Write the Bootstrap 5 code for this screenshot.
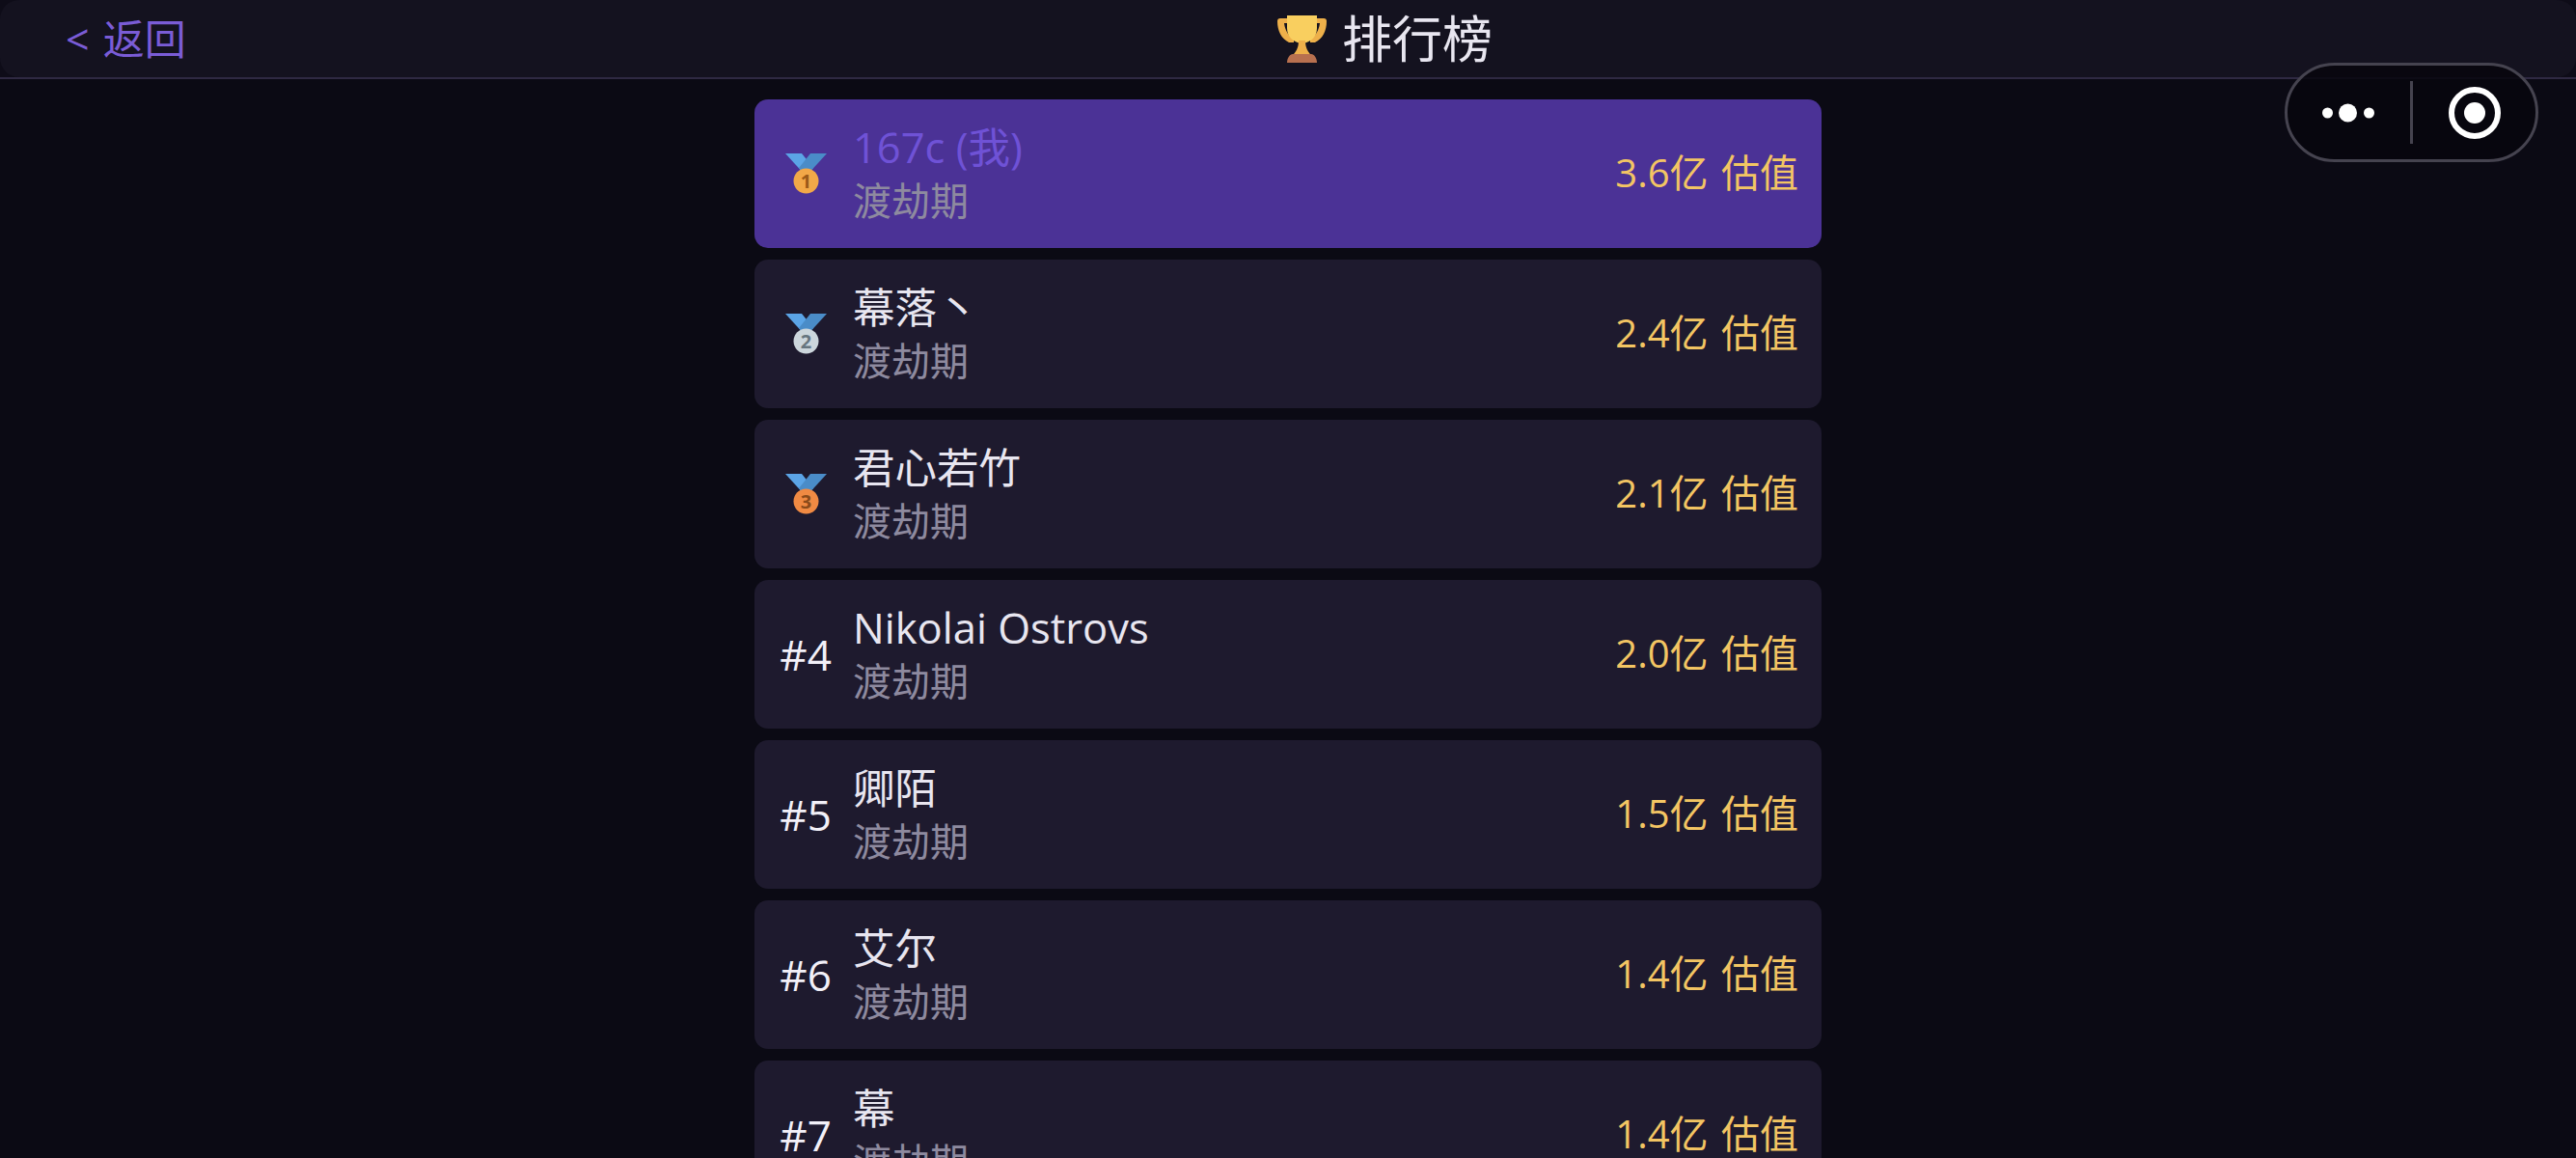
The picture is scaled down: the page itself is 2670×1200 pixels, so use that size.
<!DOCTYPE html>
<html lang="zh">
<head>
  <meta charset="UTF-8" />
  <title>排行榜</title>
  <link href="https://cdn.jsdelivr.net/npm/bootstrap@5.3.2/dist/css/bootstrap.min.css" rel="stylesheet" />
  <style>
    html, body {
      height: 1200px;
      overflow: hidden;
    }
    body {
      background: #0b0a14;
      font-family: "Open Sans", "Noto Sans CJK SC", sans-serif;
      color: #e8e6f0;
    }
    .top-bar {
      height: 82px;
      background: #0e0c18;
      border-bottom: 2px solid #2f2942;
    }
    .top-bar-inner {
      height: 80px;
      background: #14121f;
      border-radius: 20px;
      padding: 0 68px;
    }
    .back-link {
      width: 300px;
      font-size: 43px;
      line-height: 1;
      color: #7a5cd6;
      text-decoration: none;
      word-spacing: 3px;
    }
    .top-title {
      font-size: 52px;
      line-height: 1;
      color: #e8e6f0;
      gap: 15px;
      margin-left: 955px;
    }
    .rank-list {
      width: 1106px;
      margin: 21px auto 0;
      gap: 12.500px;
    }
    .rank-row {
      height: 153.500px;
      flex: none;
      background: #1e1a2e;
      border-radius: 14px;
      padding: 0 24px 0 25px;
    }
    .rank-row.is-me {
      background: #4b3296;
    }
    .rank-no {
      width: 56px;
      margin-right: 21px;
      flex: none;
      font-size: 44px;
      line-height: 1;
      color: #f2f0f8;
    }
    .player-name {
      font-size: 43.500px;
      line-height: 56px;
      color: #e8e6f0;
    }
    .is-me .player-name {
      color: #6f52d6;
    }
    .player-realm {
      font-size: 40px;
      line-height: 54px;
      color: #8e8a9f;
    }
    .player-value {
      font-size: 40px;
      line-height: 1;
      margin-bottom: 2px;
      color: #f3c563;
      word-spacing: 3px;
    }
    .medal-num {
      font-size: 20px;
      font-weight: 700;
    }
    .capsule {
      position: absolute;
      left: 2368px;
      top: 65px;
      width: 263px;
      height: 103px;
      border: 3px solid #45434f;
      border-radius: 52px;
      background: rgba(7, 6, 13, .85);
    }
    .capsule-dots {
      margin-left: 36px;
    }
    .capsule-line {
      width: 3px;
      height: 65px;
      margin-left: 37px;
      background: #45434f;
    }
    .capsule-ring {
      margin-left: 37px;
    }
  </style>
</head>
<body>

<header class="top-bar">
  <div class="top-bar-inner d-flex align-items-center">
    <a class="back-link" href="#">&lt; 返回</a>
    <div class="top-title d-flex align-items-center">
      <svg width="53" height="49" viewBox="0 0 53 49">
        <path d="M12 3H4a3 3 0 0 0-3 3c0 10 4 18 12 22h5v-4c-5-2-9-8-10-16h6z" fill="#eeb04a"/>
        <path d="M41 3h8a3 3 0 0 1 3 3c0 10-4 18-12 22h-5v-4c5-2 9-8 10-16h-6z" fill="#eeb04a"/>
        <path d="M11 0h31v13c0 9-6 15-15.500 16C17 28 11 22 11 13z" fill="#f9cf5f"/>
        <path d="M23 26h7c0 5 1 10 6 15H17c5-5 6-10 6-15z" fill="#eeb04a"/>
        <path d="M11 49c0-5 3-9 6-9h19c3 0 6 4 6 9z" fill="#b8704f"/>
      </svg>
      <span>排行榜</span>
    </div>
  </div>
</header>

<main id="rankList" class="rank-list d-flex flex-column"></main>

<div class="capsule d-flex align-items-center">
  <svg class="capsule-dots" width="54" height="20" viewBox="0 0 54 20">
    <circle cx="5.500" cy="10" r="5.500" fill="#fff"/>
    <circle cx="26.500" cy="10" r="9.500" fill="#fff"/>
    <circle cx="48.500" cy="10" r="5.500" fill="#fff"/>
  </svg>
  <span class="capsule-line"></span>
  <svg class="capsule-ring" width="54" height="54" viewBox="0 0 54 54">
    <circle cx="27" cy="27" r="24" fill="none" stroke="#fff" stroke-width="6"/>
    <circle cx="27" cy="27" r="11" fill="#fff"/>
  </svg>
</div>

<script>
  const players = [
    { name: '167c (我)', value: '3.6亿 估值', me: true },
    { name: '幕落丶', value: '2.4亿 估值' },
    { name: '君心若竹', value: '2.1亿 估值' },
    { name: 'Nikolai Ostrovs', value: '2.0亿 估值' },
    { name: '卿陌', value: '1.5亿 估值' },
    { name: '艾尔', value: '1.4亿 估值' },
    { name: '幕', value: '1.4亿 估值' }
  ];
  const medals = [
    { fill: '#f2a848', num: '#9a5a18' },
    { fill: '#ccd6dc', num: '#66757f' },
    { fill: '#f08a43', num: '#8a4a1a' }
  ];

  function medalSvg(m, n) {
    return `<svg width="43" height="42" viewBox="0 0 43 42">
      <path d="M0 0h17l12 15-8 8z" fill="#5ba4e6"/>
      <path d="M43 0H26L14 15l8 8z" fill="#4a8cc8"/>
      <circle cx="21.500" cy="28.500" r="13" fill="${m.fill}"/>
      <text class="medal-num" x="21.500" y="35.500" text-anchor="middle" fill="${m.num}">${n}</text>
    </svg>`;
  }

  let html = '';
  players.forEach((p, i) => {
    const rank = i < 3 ? medalSvg(medals[i], i + 1) : `#${i + 1}`;
    html += `<div class="rank-row d-flex align-items-center ${p.me ? 'is-me' : ''}">
      <div class="rank-no d-flex justify-content-center">${rank}</div>
      <div class="flex-grow-1">
        <div class="player-name">${p.name}</div>
        <div class="player-realm">渡劫期</div>
      </div>
      <div class="player-value">${p.value}</div>
    </div>`;
  });
  document.getElementById('rankList').innerHTML = html;
</script>

<script src="https://cdn.jsdelivr.net/npm/bootstrap@5.3.2/dist/js/bootstrap.bundle.min.js"></script>
</body>
</html>
